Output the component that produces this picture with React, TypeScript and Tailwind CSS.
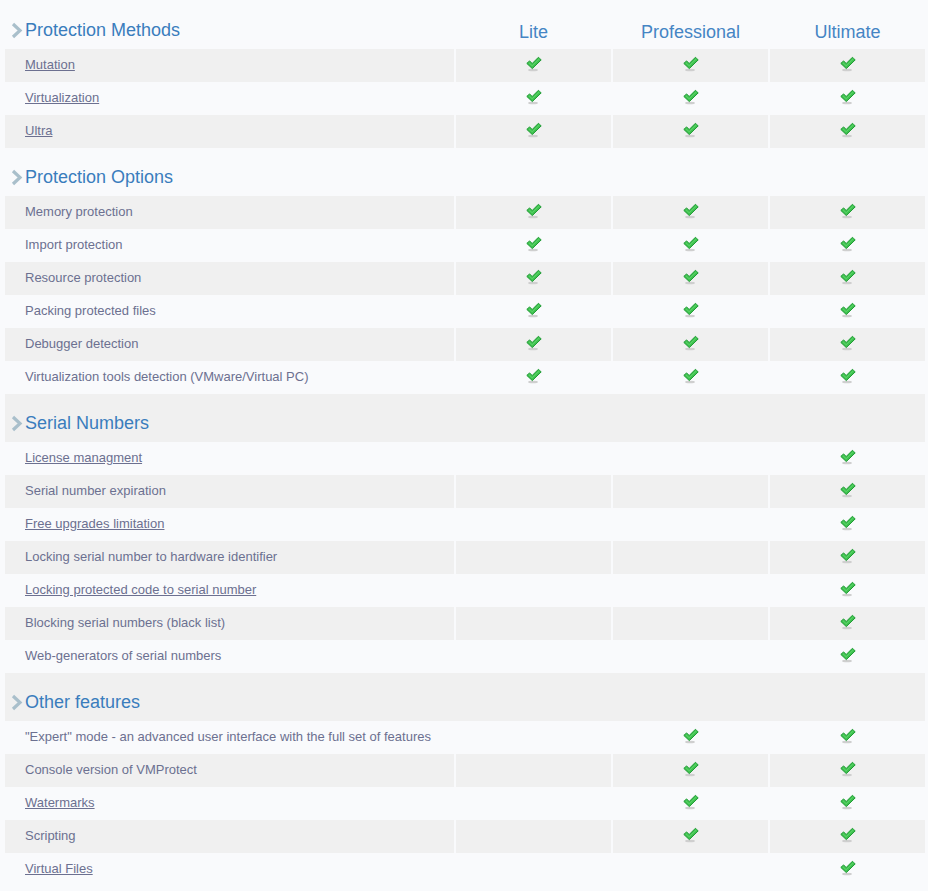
import React from 'react';

type Feature = { name: string; link?: boolean; lite?: boolean; pro?: boolean; ult?: boolean };
type Section = { title: string; rows: Feature[] };

const all = { lite: true, pro: true, ult: true };

const sections: Section[] = [
  {
    title: 'Protection Methods',
    rows: [
      { name: 'Mutation', link: true, ...all },
      { name: 'Virtualization', link: true, ...all },
      { name: 'Ultra', link: true, ...all },
    ],
  },
  {
    title: 'Protection Options',
    rows: [
      { name: 'Memory protection', ...all },
      { name: 'Import protection', ...all },
      { name: 'Resource protection', ...all },
      { name: 'Packing protected files', ...all },
      { name: 'Debugger detection', ...all },
      { name: 'Virtualization tools detection (VMware/Virtual PC)', ...all },
    ],
  },
  {
    title: 'Serial Numbers',
    rows: [
      { name: 'License managment', link: true, ult: true },
      { name: 'Serial number expiration', ult: true },
      { name: 'Free upgrades limitation', link: true, ult: true },
      { name: 'Locking serial number to hardware identifier', ult: true },
      { name: 'Locking protected code to serial number', link: true, ult: true },
      { name: 'Blocking serial numbers (black list)', ult: true },
      { name: 'Web-generators of serial numbers', ult: true },
    ],
  },
  {
    title: 'Other features',
    rows: [
      { name: '"Expert" mode - an advanced user interface with the full set of features', pro: true, ult: true },
      { name: 'Console version of VMProtect', pro: true, ult: true },
      { name: 'Watermarks', link: true, pro: true, ult: true },
      { name: 'Scripting', pro: true, ult: true },
      { name: 'Virtual Files', link: true, ult: true },
    ],
  },
];

const Check = () => (
  <svg width="18" height="16" viewBox="0 0 18 16" className="inline-block -mt-[5px]">
    <ellipse cx="8" cy="14" rx="5" ry="1.3" fill="#cfcfcf" />
    <path
      d="M1.8 7.4 L4.6 4.9 L7.2 7.5 L13.4 1.3 L16.2 3.9 L7.3 12.6 Z"
      fill="#3fc24f"
      stroke="#1f9a34"
      strokeWidth="1"
      strokeLinejoin="round"
    />
    <path d="M4 6.8 L7.2 9.8 L14.6 2.6" fill="none" stroke="#7de887" strokeWidth="0.8" opacity="0.6" />
  </svg>
);

const Chevron = () => (
  <svg width="13" height="17" viewBox="0 0 13 17" className="shrink-0">
    <path d="M3 2 L10 8.5 L3 15" fill="none" stroke="#a9bfcb" strokeWidth="3.2" />
  </svg>
);

const SectionTitle = ({ title }: { title: string }) => (
  <div className="flex items-center gap-[2px] pl-[5px]">
    <Chevron />
    <span>{title}</span>
  </div>
);

export default function App() {
  let rowIndex = 0;
  const bg = () => (rowIndex++ % 2 === 0 ? 'bg-[#f9fafc]' : 'bg-[#f0f0f0]');

  return (
    <div className="min-h-screen bg-[#f9fafc] pt-px font-['Liberation_Sans',Arial,sans-serif]">
      <table className="ml-[3px] w-[924px] table-fixed border-separate border-spacing-x-[2px] border-spacing-y-0">
        <colgroup>
          <col className="w-[449px]" />
          <col className="w-[155px]" />
          <col className="w-[155px]" />
          <col className="w-[155px]" />
        </colgroup>
        <tbody>
          {sections.map((s, si) => {
            const headBg = bg();
            return (
              <React.Fragment key={s.title}>
                {si === 0 ? (
                  <tr className="h-[48px] text-[18px] leading-[22px] text-[#3a7dbd]">
                    <td className={`${headBg} pt-[18px] pb-[8px] p-0`}>
                      <SectionTitle title={s.title} />
                    </td>
                    {['Lite', 'Professional', 'Ultimate'].map((e) => (
                      <td key={e} className={`${headBg} pt-[20px] pb-[6px] text-center text-[#4585c4]`}>
                        {e}
                      </td>
                    ))}
                  </tr>
                ) : (
                  <tr className="h-[48px] text-[18px] leading-[22px] text-[#3a7dbd]">
                    <td colSpan={4} className={`${headBg} pt-[18px] pb-[8px]`}>
                      <SectionTitle title={s.title} />
                    </td>
                  </tr>
                )}
                {s.rows.map((r) => {
                  const c = bg();
                  return (
                    <tr key={r.name} className="h-[33px] text-[13px] leading-[16px] text-[#6c7090]">
                      <td className={`${c} pl-[20px] pb-[2px] whitespace-nowrap`}>
                        {r.link ? <a className="underline cursor-pointer">{r.name}</a> : r.name}
                      </td>
                      <td className={`${c} text-center`}>{r.lite && <Check />}</td>
                      <td className={`${c} text-center`}>{r.pro && <Check />}</td>
                      <td className={`${c} text-center`}>{r.ult && <Check />}</td>
                    </tr>
                  );
                })}
              </React.Fragment>
            );
          })}
        </tbody>
      </table>
    </div>
  );
}
